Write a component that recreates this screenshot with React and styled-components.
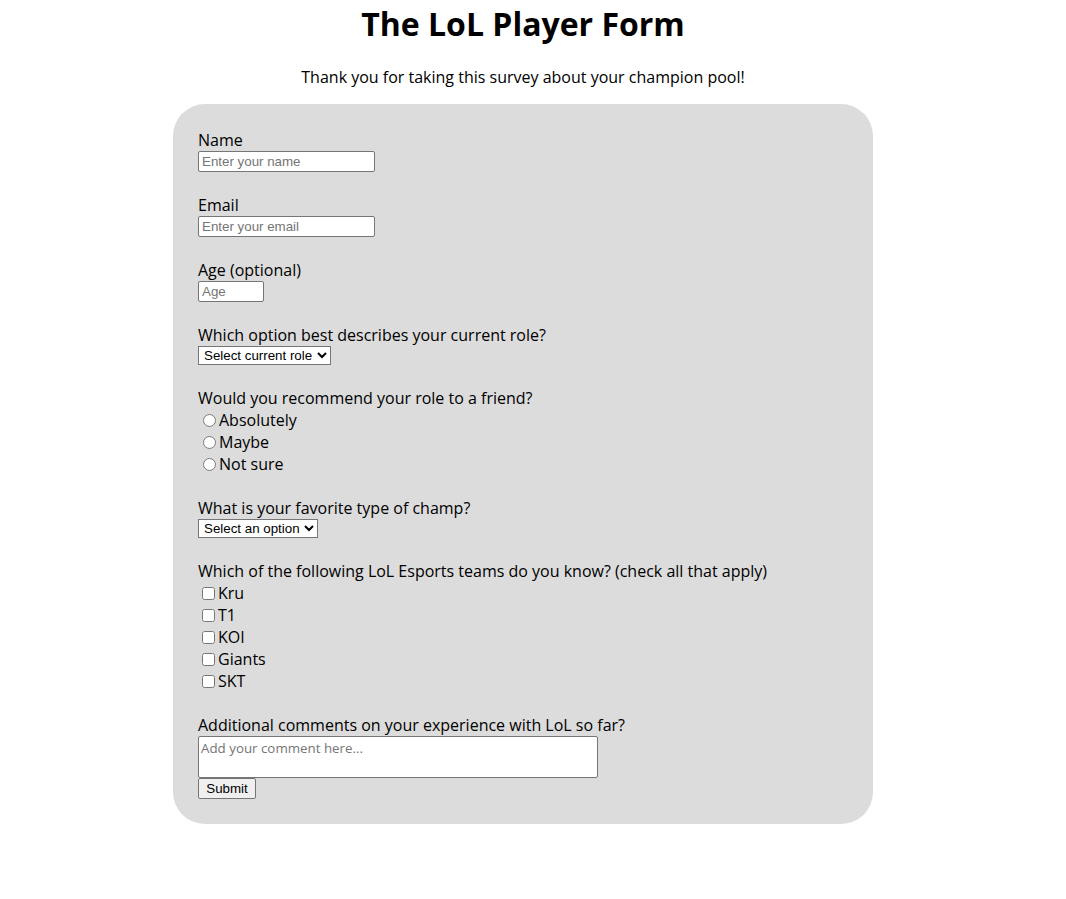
import React from "react";
import styled, { createGlobalStyle } from "styled-components";

const Global = createGlobalStyle`
  html, body { margin: 0; padding: 0; background: #ffffff; }
  body { font-family: "Open Sans", "DejaVu Sans", sans-serif; font-size: 16px; color: #000; }
`;

const Page = styled.main`
  padding-right: 20px;
  display: flex;
  flex-direction: column;
  align-items: center;
`;

const Title = styled.h1`
  margin: 2px 0 21px;
  font-size: 32px;
  font-weight: 700;
  line-height: normal;
  text-align: center;
`;

const Subtitle = styled.p`
  margin: 0 0 16px;
  font-size: 16px;
  line-height: normal;
  text-align: center;
`;

const Card = styled.form`
  box-sizing: border-box;
  width: 700px;
  padding: 25px;
  background: #dcdcdc;
  border-radius: 32px;
  display: flex;
  flex-direction: column;
`;

const Group = styled.div`
  display: flex;
  flex-direction: column;
  align-items: flex-start;
  margin-bottom: ${(p) => (p.$gap ?? 22)}px;
`;

const Label = styled.label`
  display: block;
  line-height: normal;
`;

const TextInput = styled.input`
  box-sizing: border-box;
  width: ${(p) => p.$w}px;
  height: 21px;
  margin: 0;
  padding: 1px 3px;
  border: 1px solid #767676;
  border-radius: 2px;
  background: #fff;
  font-family: "Liberation Sans", Arial, sans-serif;
  font-size: 13.33px;
  &::placeholder { color: #757575; }
`;

const Select = styled.select`
  box-sizing: border-box;
  width: ${(p) => p.$w}px;
  height: 19px;
  margin: 0;
  padding: 0 0 0 1px;
  border: 1px solid #767676;
  border-radius: 0;
  background: #fff;
  color: #000;
  font-family: "Liberation Sans", Arial, sans-serif;
  font-size: 13.33px;
`;

const Option = styled.label`
  display: flex;
  align-items: center;
  height: 22px;
  line-height: normal;
`;

const Radio = styled.input.attrs({ type: "radio" })`
  width: 13px;
  height: 13px;
  margin: 1px 3px 0 5px;
`;

const Check = styled.input.attrs({ type: "checkbox" })`
  width: 13px;
  height: 13px;
  margin: 1px 3px 0 4px;
`;

const TextArea = styled.textarea`
  box-sizing: border-box;
  display: block;
  width: 400px;
  height: 42px;
  margin: 0;
  padding: 2px;
  border: 1px solid #767676;
  border-radius: 2px;
  background: #fff;
  resize: none;
  font-family: "Open Sans", sans-serif;
  font-size: 13.33px;
  line-height: normal;
  &::placeholder { color: #757575; }
`;

const SubmitButton = styled.button`
  box-sizing: border-box;
  width: 58px;
  height: 21px;
  margin: 0;
  padding: 1px 6px;
  border: 1px solid #767676;
  border-radius: 2px;
  background: #efefef;
  color: #000;
  font-family: "Liberation Sans", Arial, sans-serif;
  font-size: 13.33px;
  line-height: normal;
`;

const roles = ["Top", "Jungle", "Mid", "ADC", "Support"];
const champTypes = ["Assassin", "Fighter", "Mage", "Marksman", "Support", "Tank"];
const teams = ["Kru", "T1", "KOI", "Giants", "SKT"];
const recommend = ["Absolutely", "Maybe", "Not sure"];

export default function App() {
  return (
    <>
      <Global />
      <Page>
        <Title>The LoL Player Form</Title>
        <Subtitle>Thank you for taking this survey about your champion pool!</Subtitle>
        <Card onSubmit={(e) => e.preventDefault()}>
          <Group>
            <Label htmlFor="name">Name</Label>
            <TextInput id="name" type="text" $w={177} placeholder="Enter your name" />
          </Group>
          <Group>
            <Label htmlFor="email">Email</Label>
            <TextInput id="email" type="email" $w={177} placeholder="Enter your email" />
          </Group>
          <Group>
            <Label htmlFor="age">Age (optional)</Label>
            <TextInput id="age" type="text" $w={66} placeholder="Age" />
          </Group>
          <Group>
            <Label htmlFor="role">Which option best describes your current role?</Label>
            <Select id="role" $w={133} defaultValue="">
              <option value="" disabled>Select current role</option>
              {roles.map((r) => (
                <option key={r}>{r}</option>
              ))}
            </Select>
          </Group>
          <Group>
            <Label as="div">Would you recommend your role to a friend?</Label>
            {recommend.map((r) => (
              <Option key={r}>
                <Radio name="recommend" value={r} />
                {r}
              </Option>
            ))}
          </Group>
          <Group>
            <Label htmlFor="champ">What is your favorite type of champ?</Label>
            <Select id="champ" $w={120} defaultValue="">
              <option value="" disabled>Select an option</option>
              {champTypes.map((c) => (
                <option key={c}>{c}</option>
              ))}
            </Select>
          </Group>
          <Group>
            <Label as="div">Which of the following LoL Esports teams do you know? (check all that apply)</Label>
            {teams.map((t) => (
              <Option key={t}>
                <Check value={t} />
                {t}
              </Option>
            ))}
          </Group>
          <Group $gap={0}>
            <Label htmlFor="comments">Additional comments on your experience with LoL so far?</Label>
            <TextArea id="comments" placeholder="Add your comment here..." />
            <SubmitButton type="submit">Submit</SubmitButton>
          </Group>
        </Card>
      </Page>
    </>
  );
}
